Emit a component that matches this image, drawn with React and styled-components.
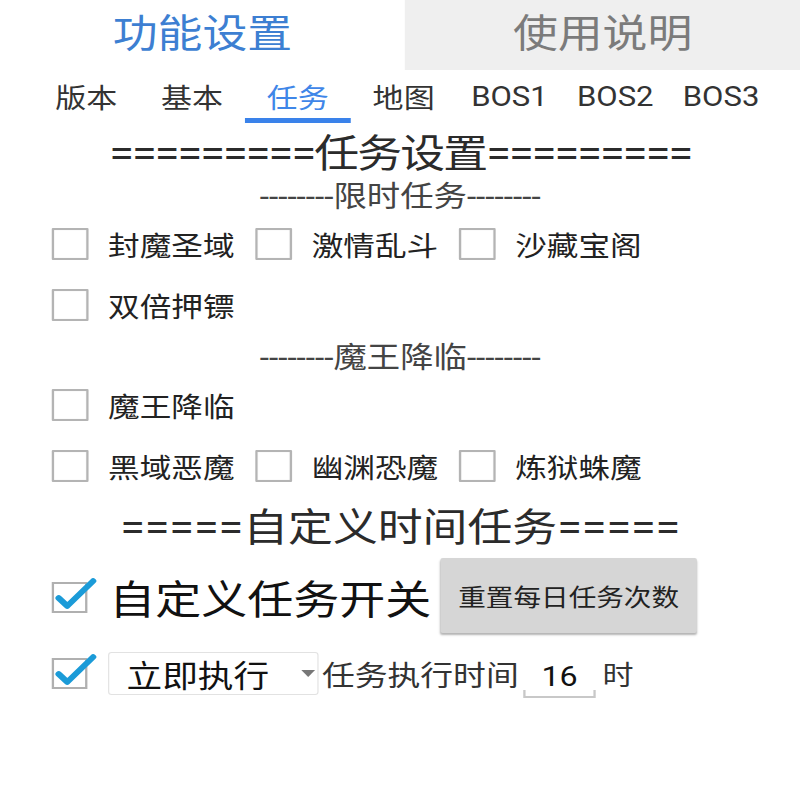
import React from "react";
import styled, { createGlobalStyle } from "styled-components";

const GlobalStyle = createGlobalStyle`
  html, body {
    margin: 0;
    padding: 0;
    background: #ffffff;
    overflow: hidden;
  }
  body {
    font-family: Roboto, "Noto Sans CJK SC", sans-serif;
    color: #222;
  }
`;

// the reference is a phone screen stretched sideways, so the page is laid
// out at its natural width and widened once here
const Screen = styled.div`
  width: 696px;
  height: 800px;
  transform: scaleX(1.15);
  transform-origin: 0 0;
  display: flex;
  flex-direction: column;
`;

const TopTabs = styled.div`
  display: grid;
  grid-template-columns: 352px 1fr;
  height: 70px;
`;

const TopTab = styled.div`
  display: flex;
  align-items: center;
  justify-content: center;
  padding-bottom: 10px;
  font-family: "Noto Sans CJK SC", sans-serif;
  font-size: 39px;
  background: ${(p) => (p.$active ? "#ffffff" : "#efefef")};
  color: ${(p) => (p.$active ? "#3d7fd2" : "#7b7b7b")};
`;

const SubTabs = styled.div`
  display: flex;
  height: 56px;
  padding-left: 29px;
`;

const SubTab = styled.div`
  position: relative;
  width: 92px;
  height: 53px;
  display: flex;
  align-items: center;
  justify-content: center;
  font-size: 27px;
  color: ${(p) => (p.$active ? "#3f86e8" : "#333")};

  &::after {
    content: "";
    position: absolute;
    left: 0;
    right: 0;
    bottom: 0;
    height: 5px;
    background: ${(p) => (p.$active ? "#3a82ea" : "transparent")};
  }
`;

const Banner = styled.div`
  height: ${(p) => p.$h}px;
  display: flex;
  align-items: center;
  justify-content: center;
  font-size: ${(p) => p.$size}px;
  letter-spacing: ${(p) => p.$track || 0}px;
  color: ${(p) => p.$color || "#2b2b2b"};
  white-space: nowrap;
`;

const CheckRow = styled.div`
  height: ${(p) => p.$h || 60}px;
  display: flex;
  align-items: center;
  gap: ${(p) => p.$gap ?? 18}px;
  padding-left: 45px;
`;

const CheckItem = styled.label`
  display: flex;
  align-items: center;
  gap: ${(p) => p.$gap ?? 17}px;
`;

const Box = styled.span`
  box-sizing: border-box;
  width: 32px;
  height: 32px;
  border: 2px solid #b4b4b4;
  border-radius: 1px;
  background: #fff;
  box-shadow: inset 0 0 1px rgba(0, 0, 0, 0.15);
`;

const Label = styled.span`
  font-family: "Noto Sans CJK SC", sans-serif;
  font-size: ${(p) => p.$size || 27.5}px;
  margin-left: ${(p) => p.$ml || 0}px;
  color: ${(p) => p.$color || "#222"};
  white-space: nowrap;
`;

const ActionButton = styled.button`
  width: 223px;
  height: 75px;
  margin-left: -10px;
  margin-top: -4px;
  border: none;
  border-radius: 2px;
  background: #d6d6d6;
  box-shadow: 0 2px 2px rgba(0, 0, 0, 0.3);
  font-family: "Noto Sans CJK SC", sans-serif;
  font-size: 24px;
  color: #222;
  padding: 0;
`;

const Select = styled.div`
  box-sizing: border-box;
  width: 183px;
  height: 43px;
  margin-left: -1px;
  border: 1px solid #e2e2e2;
  border-radius: 3px;
  display: flex;
  align-items: center;
  justify-content: space-between;
  padding-left: 15px;
  padding-right: 2px;
  font-family: "Noto Sans CJK SC", sans-serif;
  font-size: 31px;
  color: #111;
`;

const Arrow = styled.span`
  width: 0;
  height: 0;
  border-left: 6px solid transparent;
  border-right: 6px solid transparent;
  border-top: 7px solid #777;
`;

const Field = styled.div`
  position: relative;
  width: 63px;
  height: 40px;
  margin-left: 4px;
  margin-top: 8px;
  display: flex;
  align-items: center;
  justify-content: center;
  font-size: 28px;
  color: #111;
  border-bottom: 2px solid #c8c8c8;

  &::before,
  &::after {
    content: "";
    position: absolute;
    bottom: 0;
    width: 2px;
    height: 6px;
    background: #c8c8c8;
  }
  &::before {
    left: 0;
  }
  &::after {
    right: 0;
  }
`;

const Tick = () => (
  <svg width="40" height="36" viewBox="0 0 40 36" style={{ overflow: "visible", marginRight: -8 }}>
    <rect x="1" y="4" width="29" height="29" fill="#fff" stroke="#b0b0b0" strokeWidth="2" />
    <path d="M6 19 L13.5 27 L36 2" fill="none" stroke="#1b9bd8" strokeWidth="5.5" strokeLinecap="round" strokeLinejoin="round" />
  </svg>
);

const Check = ({ children, checked }) => (
  <CheckItem>
    {checked ? <Tick /> : <Box />}
    <Label>{children}</Label>
  </CheckItem>
);

const subTabs = ["版本", "基本", "任务", "地图", "BOS1", "BOS2", "BOS3"];

export default function App() {
  return (
    <>
      <GlobalStyle />
      <Screen>
        <TopTabs>
          <TopTab $active>功能设置</TopTab>
          <TopTab>使用说明</TopTab>
        </TopTabs>

        <SubTabs>
          {subTabs.map((t) => (
            <SubTab key={t} $active={t === "任务"}>
              {t}
            </SubTab>
          ))}
        </SubTabs>

        <Banner $h={48} $size={39} $track={-1.6}>=========任务设置=========</Banner>
        <Banner $h={40} $size={29} $color="#444">--------限时任务--------</Banner>

        <CheckRow>
          <Check>封魔圣域</Check>
          <Check>激情乱斗</Check>
          <Check>沙藏宝阁</Check>
        </CheckRow>
        <CheckRow $h={62}>
          <Check>双倍押镖</Check>
        </CheckRow>

        <Banner $h={38} $size={29} $color="#444">--------魔王降临--------</Banner>

        <CheckRow $h={62}>
          <Check>魔王降临</Check>
        </CheckRow>
        <CheckRow>
          <Check>黑域恶魔</Check>
          <Check>幽渊恐魔</Check>
          <Check>炼狱蛛魔</Check>
        </CheckRow>

        <Banner $h={56} $size={39}>=====自定义时间任务=====</Banner>

        <CheckRow $h={90}>
          <CheckItem $gap={18}>
            <Tick />
            <Label $size={40} $color="#111">自定义任务开关</Label>
          </CheckItem>
          <ActionButton>重置每日任务次数</ActionButton>
        </CheckRow>

        <CheckRow $h={62} $gap={0}>
          <CheckItem $gap={18}>
            <Tick />
            <Select>
              <span>立即执行</span>
              <Arrow />
            </Select>
          </CheckItem>
          <Label $size={28.5} $color="#333" $ml={3}>任务执行时间</Label>
          <Field>16</Field>
          <Label $size={27} $color="#333" $ml={6}>时</Label>
        </CheckRow>
      </Screen>
    </>
  );
}
